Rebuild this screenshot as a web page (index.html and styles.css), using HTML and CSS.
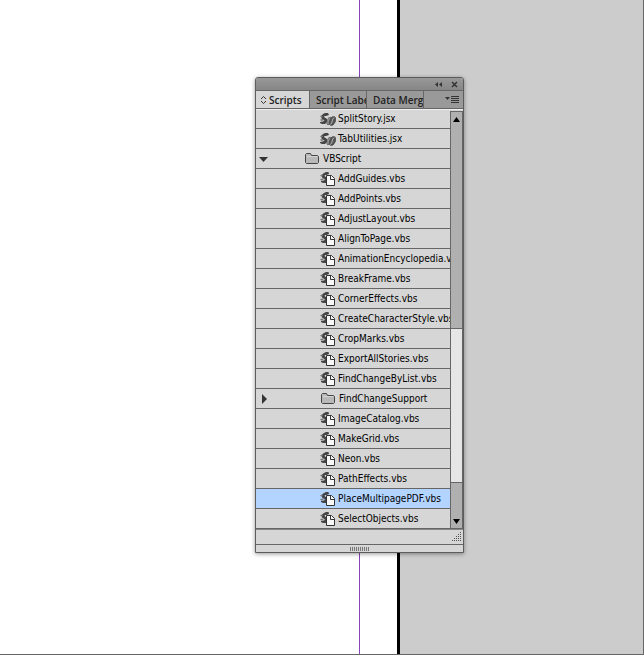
FILE: index.html
```
<!DOCTYPE html>
<html lang="en">
<head>
    <meta charset="UTF-8">
    <meta name="viewport" content="width=device-width, initial-scale=1.0">
    <title>Scripts</title>
    <link rel="stylesheet" href="styles.css">
</head>
<body>
    <!-- Icons shared by the rows -->
    <svg class="defs" width="0" height="0">
        <symbol id="icon-script" viewBox="0 0 16 17">
            <path d="M4 3L6 2H8.500L9 4L6.500 5H5L4.500 6L7 8V13H3L1 12V11L4 10.500L5 9.500L2 7.500L1.500 5Z" fill="#444"/>
            <path d="M0 5.500L2 4.500L3 6L1 6.500ZM0 9L3 8.500L3.500 10L1 10.500Z" fill="#777"/>
            <path d="M6.500 5.500H11.500L14.500 8.500V15.500H6.500Z" fill="#f8f8f8" stroke="#333"/>
            <path d="M10.500 5.500V9.500H14.500" fill="none" stroke="#333"/>
        </symbol>
        <symbol id="icon-jsx" viewBox="0 0 16 17">
            <path d="M3 4L5 3H8L9 5L6 6H4.500L4 7L7 9V12L5 14H2L0 13V12L3 11.500L4.500 10.500L1.500 8.500L1 6Z" fill="#444"/>
            <path d="M0 6L2 5.500L3 7L1 7.500ZM0 9.500L3 9L3.500 10.500L1 11Z" fill="#777"/>
            <ellipse cx="9" cy="11" rx="1.800" ry="4" transform="rotate(20 9 11)" fill="#999" stroke="#555" stroke-width=".7"/>
            <ellipse cx="12.500" cy="11" rx="2.800" ry="4.700" transform="rotate(25 12.500 11)" fill="#555" stroke="#444" stroke-width=".7"/>
            <path d="M14 7.500C11.500 9.500 13 12 10.500 14.500" fill="none" stroke="#bbb"/>
        </symbol>
        <symbol id="icon-folder" viewBox="0 0 16 17">
            <path d="M.5 12.500V4.500L1.500 3.500H5.500L6.500 5.500H12.500L13.500 6.500V12.500L12.500 13.500H1.500Z" fill="#b9b9b9" stroke="#444"/>
            <path d="M2 6.500H12" stroke="#d5d5d5"/>
        </symbol>
    </svg>

    <!-- Document window -->
    <main class="document">
        <div class="page"><div class="margin-guide"></div></div>
        <div class="pasteboard"></div>
    </main>

    <!-- Floating panel -->
    <section class="panel">
        <header class="title-bar">
            <button class="title-button" aria-label="Collapse">
                <svg width="9" height="7" viewBox="0 0 9 7"><path d="M4 1V6L1 3.500ZM8 1V6L5 3.500Z" fill="#333"/></svg>
            </button>
            <button class="title-button" aria-label="Close">
                <svg width="7" height="7" viewBox="0 0 7 7"><path d="M1 1L6 6M6 1L1 6" stroke="#333" stroke-width="1.500"/></svg>
            </button>
        </header>
        <nav class="tabs">
            <button class="tab tab-active">
                <svg width="7" height="10" viewBox="0 0 7 10"><path d="M1 4L3.500 1.500L6 4M1 6L3.500 8.500L6 6" fill="none" stroke="#333"/></svg>
                Scripts
            </button>
            <button class="tab">Script Label</button>
            <button class="tab">Data Merge</button>
            <button class="panel-menu" aria-label="Panel menu">
                <svg width="15" height="9" viewBox="0 0 15 9"><path d="M0 2H5L2.500 5Z" fill="#333"/><path d="M6 1.500H14M6 3.500H14M6 5.500H14M6 7.500H14" stroke="#333"/></svg>
            </button>
        </nav>
        <div class="list-area">
            <ul class="script-list">
                <li class="row"><svg class="icon"><use href="#icon-jsx"/></svg><span>SplitStory.jsx</span></li>
                <li class="row"><svg class="icon"><use href="#icon-jsx"/></svg><span>TabUtilities.jsx</span></li>
                <li class="row row-folder">
                    <button class="toggle" aria-label="Close VBScript"><svg width="10" height="10" viewBox="0 0 10 10"><path d="M0 3H9L4.500 8Z" fill="#333"/></svg></button>
                    <svg class="icon"><use href="#icon-folder"/></svg><span>VBScript</span>
                </li>
                <li class="row"><svg class="icon"><use href="#icon-script"/></svg><span>AddGuides.vbs</span></li>
                <li class="row"><svg class="icon"><use href="#icon-script"/></svg><span>AddPoints.vbs</span></li>
                <li class="row"><svg class="icon"><use href="#icon-script"/></svg><span>AdjustLayout.vbs</span></li>
                <li class="row"><svg class="icon"><use href="#icon-script"/></svg><span>AlignToPage.vbs</span></li>
                <li class="row"><svg class="icon"><use href="#icon-script"/></svg><span>AnimationEncyclopedia.vbs</span></li>
                <li class="row"><svg class="icon"><use href="#icon-script"/></svg><span>BreakFrame.vbs</span></li>
                <li class="row"><svg class="icon"><use href="#icon-script"/></svg><span>CornerEffects.vbs</span></li>
                <li class="row"><svg class="icon"><use href="#icon-script"/></svg><span>CreateCharacterStyle.vbs</span></li>
                <li class="row"><svg class="icon"><use href="#icon-script"/></svg><span>CropMarks.vbs</span></li>
                <li class="row"><svg class="icon"><use href="#icon-script"/></svg><span>ExportAllStories.vbs</span></li>
                <li class="row"><svg class="icon"><use href="#icon-script"/></svg><span>FindChangeByList.vbs</span></li>
                <li class="row row-subfolder">
                    <button class="toggle" aria-label="Open FindChangeSupport"><svg width="10" height="10" viewBox="0 0 10 10"><path d="M3 0V10L8 5Z" fill="#333"/></svg></button>
                    <svg class="icon"><use href="#icon-folder"/></svg><span>FindChangeSupport</span>
                </li>
                <li class="row"><svg class="icon"><use href="#icon-script"/></svg><span>ImageCatalog.vbs</span></li>
                <li class="row"><svg class="icon"><use href="#icon-script"/></svg><span>MakeGrid.vbs</span></li>
                <li class="row"><svg class="icon"><use href="#icon-script"/></svg><span>Neon.vbs</span></li>
                <li class="row"><svg class="icon"><use href="#icon-script"/></svg><span>PathEffects.vbs</span></li>
                <li class="row row-selected"><svg class="icon"><use href="#icon-script"/></svg><span>PlaceMultipagePDF.vbs</span></li>
                <li class="row"><svg class="icon"><use href="#icon-script"/></svg><span>SelectObjects.vbs</span></li>
            </ul>
            <div class="scrollbar">
                <button class="scroll-button" aria-label="Scroll up"><svg width="7" height="5" viewBox="0 0 7 5"><path d="M0 5H7L3.500 0Z" fill="#000"/></svg></button>
                <div class="scroll-track"><div class="scroll-thumb"></div></div>
                <button class="scroll-button" aria-label="Scroll down"><svg width="7" height="5" viewBox="0 0 7 5"><path d="M0 0H7L3.500 5Z" fill="#000"/></svg></button>
            </div>
        </div>
        <footer class="status-bar">
            <svg width="10" height="10" viewBox="0 0 10 10"><path d="M8 .5H9M6 2.500H7M8 2.500H9M4 4.500H5M6 4.500H7M8 4.500H9M2 6.500H3M4 6.500H5M6 6.500H7M8 6.500H9M0 8.500H1M2 8.500H3M4 8.500H5M6 8.500H7M8 8.500H9" stroke="#555"/></svg>
        </footer>
        <div class="grip"><div class="grip-lines"></div></div>
    </section>
</body>
</html>
```
FILE: styles.css
```
* {
    box-sizing: border-box;
}

body {
    margin: 0;
    font-family: "DejaVu Sans Condensed", "DejaVu Sans", sans-serif;
    font-size: 10px;
    color: #000;
}

button {
    display: flex;
    align-items: center;
    justify-content: center;
    margin: 0;
    padding: 0;
    border: none;
    background: none;
    font: inherit;
    color: inherit;
}

svg {
    display: block;
    flex: none;
}

.defs {
    position: absolute;
}

/* Document window */
.document {
    display: flex;
    height: 100vh;
    border-right: 1px solid #666;
    border-bottom: 1px solid #666;
}

.page {
    flex: 1;
    padding-right: 37px;
    background: #fff;
    border-right: 3px solid #000;
}

.margin-guide {
    height: 100%;
    border-right: 1px solid #8844b8;
}

.pasteboard {
    width: 243px;
    background: #ccc;
}

/* Floating panel */
.panel {
    position: absolute;
    top: 77px;
    right: 180px;
    width: 209px;
    background: #d6d6d6;
    border: 1px solid #5c5c5c;
    border-radius: 3px 3px 0 0;
    box-shadow: 0 1px 4px rgba(0, 0, 0, 0.4);
    overflow: hidden;
}

.title-bar {
    display: flex;
    align-items: center;
    justify-content: flex-end;
    gap: 8px;
    height: 13px;
    padding-right: 5px;
    background: linear-gradient(#989898, #868686);
    border-bottom: 1px solid #666;
}

.tabs {
    display: flex;
    height: 18px;
    background: #999;
    border-bottom: 1px solid #666;
    font-family: "Open Sans", "Noto Sans", sans-serif;
    font-weight: 600;
    color: #222;
}

.tab {
    justify-content: flex-start;
    width: 57px;
    padding-left: 6px;
    border-right: 1px solid #666;
    white-space: nowrap;
    overflow: hidden;
}

.tab-active {
    width: 54px;
    gap: 2px;
    padding-left: 4px;
    background: #d6d6d6;
}

.panel-menu {
    flex: 1;
    justify-content: flex-end;
    padding-right: 3px;
}

/* Script list */
.list-area {
    display: flex;
    box-shadow: inset 0 1px #eee;
}

.script-list {
    flex: 1;
    min-width: 0;
    margin: 0;
    padding: 0;
    list-style: none;
}

.row {
    display: flex;
    align-items: center;
    gap: 2px;
    height: 20px;
    padding-left: 64px;
    border-bottom: 1px solid #666;
    white-space: nowrap;
    overflow: hidden;
}

.row-folder,
.row-subfolder {
    padding-left: 3px;
}

.row-selected {
    background: #b3d4ff;
}

.icon {
    width: 16px;
    height: 17px;
}

.toggle {
    width: 10px;
    height: 18px;
    margin-right: 34px;
}

.row-subfolder .toggle {
    margin-right: 50px;
}

/* Scrollbar */
.scrollbar {
    display: flex;
    flex-direction: column;
    width: 13px;
    margin-top: 2px;
    background: #b0b0b0;
    border: 1px solid #666;
}

.scroll-button {
    height: 14px;
}

.scroll-track {
    display: flex;
    flex-direction: column;
    flex: 1;
    padding: 202px 0 31px;
}

.scroll-thumb {
    flex: 1;
    background: #e6e6e6;
    border-top: 1px solid #666;
    border-bottom: 1px solid #666;
}

/* Panel bottom */
.status-bar {
    display: flex;
    align-items: flex-end;
    justify-content: flex-end;
    height: 16px;
    padding: 0 1px 2px 0;
    border-top: 1px solid #888;
    border-bottom: 1px solid #666;
}

.grip {
    display: flex;
    align-items: center;
    justify-content: center;
    height: 7px;
}

.grip-lines {
    width: 19px;
    height: 4px;
    background: repeating-linear-gradient(to right, #777 0, #777 1px, transparent 1px, transparent 2px);
}
```
